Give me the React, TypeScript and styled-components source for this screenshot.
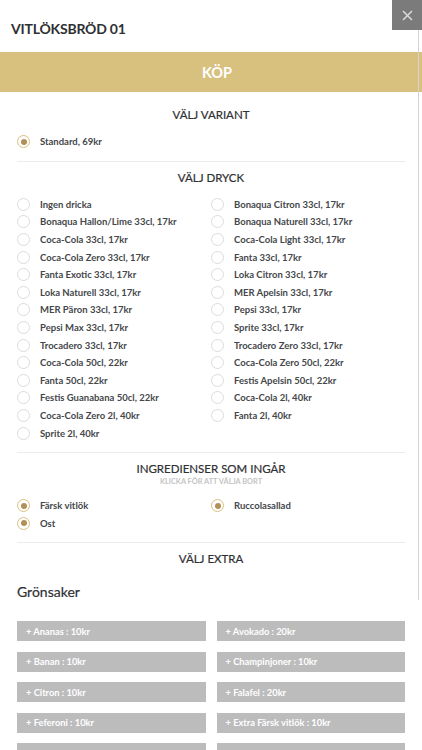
import React from 'react';
import styled, { createGlobalStyle } from 'styled-components';

const GlobalStyle = createGlobalStyle`
  html, body {
    margin: 0;
    padding: 0;
    background: #fff;
  }
  body {
    font-family: Lato, "Open Sans", "Liberation Sans", sans-serif;
    color: #333;
    -webkit-font-smoothing: antialiased;
  }
`;

const Modal = styled.div`
  position: relative;
  width: 422px;
  height: 750px;
  overflow: hidden;
  background: #fff;
`;

const Header = styled.div`
  height: 52px;
  display: flex;
  align-items: center;
  padding: 4px 11px 0;
  box-sizing: border-box;
`;

const Title = styled.h1`
  margin: 0;
  font-size: 14px;
  font-weight: 700;
  color: #2f3033;
  letter-spacing: -0.2px;
`;

const CloseButton = styled.button`
  position: absolute;
  top: 0;
  right: 0;
  width: 30px;
  height: 30px;
  border: 0;
  padding: 0;
  background: #7b7b7b;
  color: #d8d8d8;
  display: flex;
  align-items: center;
  justify-content: center;
`;

const ScrollTrack = styled.div`
  position: absolute;
  top: 30px;
  right: 3px;
  width: 1px;
  height: 570px;
  background: #d4d4d4;
`;

const BuyBar = styled.div`
  height: 40px;
  padding-left: 12px;
  background: #d8c07f;
  color: #fff;
  font-size: 14.5px;
  font-weight: 700;
  display: flex;
  align-items: center;
  justify-content: center;
`;

const Content = styled.div`
  padding: 0 17px;
`;

const Section = styled.section<{ $top?: number; $last?: boolean }>`
  padding: ${(p) => p.$top ?? 8}px 0 ${(p) => (p.$last ? 0 : 10)}px;
  border-bottom: ${(p) => (p.$last ? 'none' : '1px solid #ececec')};
`;

const SectionTitle = styled.h2`
  margin: 0;
  text-align: center;
  font-size: 11.5px;
  line-height: 16px;
  font-weight: 400;
  color: #2f3033;
  -webkit-text-stroke: 0.2px #2f3033;
`;

const SectionHint = styled.div`
  margin-top: 1px;
  text-align: center;
  font-size: 7.4px;
  line-height: 8px;
  font-weight: 700;
  color: #c4c4c4;
`;

const OptionGrid = styled.div<{ $gap?: number }>`
  display: grid;
  grid-template-columns: 194px 194px;
  margin-top: ${(p) => p.$gap ?? 10}px;
`;

const Option = styled.label`
  display: flex;
  align-items: center;
  height: 17.6px;
  gap: 10px;
  font-size: 9.5px;
  font-weight: 700;
  color: #45474b;
  white-space: nowrap;
`;

const Radio = styled.span<{ $checked?: boolean }>`
  width: 13px;
  height: 13px;
  box-sizing: border-box;
  border-radius: 50%;
  border: 1px solid ${(p) => (p.$checked ? '#d8c07f' : '#dcdcdc')};
  display: flex;
  align-items: center;
  justify-content: center;
  flex-shrink: 0;

  &::after {
    content: '';
    width: 6px;
    height: 6px;
    border-radius: 50%;
    background: #b38f58;
    display: ${(p) => (p.$checked ? 'block' : 'none')};
  }
`;

const GroupTitle = styled.h3`
  margin: 15px 0 0;
  font-size: 14px;
  line-height: 20px;
  font-weight: 400;
  color: #2f3033;
  -webkit-text-stroke: 0.2px #2f3033;
`;

const ExtraGrid = styled.div`
  display: grid;
  grid-template-columns: 1fr 1fr;
  column-gap: 11px;
  row-gap: 10.5px;
  margin-top: 19px;
`;

const ExtraButton = styled.button`
  height: 20px;
  border: 0;
  padding: 0 0 0 9px;
  background: #bcbcbd;
  color: #fff;
  font-family: inherit;
  font-size: 9.3px;
  font-weight: 700;
  text-align: left;
`;

const drinks = [
  'Ingen dricka',
  'Bonaqua Citron 33cl, 17kr',
  'Bonaqua Hallon/Lime 33cl, 17kr',
  'Bonaqua Naturell 33cl, 17kr',
  'Coca-Cola 33cl, 17kr',
  'Coca-Cola Light 33cl, 17kr',
  'Coca-Cola Zero 33cl, 17kr',
  'Fanta 33cl, 17kr',
  'Fanta Exotic 33cl, 17kr',
  'Loka Citron 33cl, 17kr',
  'Loka Naturell 33cl, 17kr',
  'MER Apelsin 33cl, 17kr',
  'MER Päron 33cl, 17kr',
  'Pepsi 33cl, 17kr',
  'Pepsi Max 33cl, 17kr',
  'Sprite 33cl, 17kr',
  'Trocadero 33cl, 17kr',
  'Trocadero Zero 33cl, 17kr',
  'Coca-Cola 50cl, 22kr',
  'Coca-Cola Zero 50cl, 22kr',
  'Fanta 50cl, 22kr',
  'Festis Apelsin 50cl, 22kr',
  'Festis Guanabana 50cl, 22kr',
  'Coca-Cola 2l, 40kr',
  'Coca-Cola Zero 2l, 40kr',
  'Fanta 2l, 40kr',
  'Sprite 2l, 40kr',
];

const ingredients = ['Färsk vitlök', 'Ruccolasallad', 'Ost'];

const extras = [
  '+ Ananas : 10kr',
  '+ Avokado : 20kr',
  '+ Banan : 10kr',
  '+ Champinjoner : 10kr',
  '+ Citron : 10kr',
  '+ Falafel : 20kr',
  '+ Feferoni : 10kr',
  '+ Extra Färsk vitlök : 10kr',
  '',
  '',
];

export default function App() {
  return (
    <>
      <GlobalStyle />
      <Modal>
        <Header>
          <Title>VITLÖKSBRÖD 01</Title>
        </Header>
        <CloseButton aria-label="Stäng">
          <svg width="11" height="11" viewBox="0 0 11 11">
            <path d="M1 1L10 10M10 1L1 10" stroke="currentColor" strokeWidth="1.6" />
          </svg>
        </CloseButton>
        <ScrollTrack />
        <BuyBar>KÖP</BuyBar>
        <Content>
          <Section $top={15}>
            <SectionTitle>VÄLJ VARIANT</SectionTitle>
            <OptionGrid>
              <Option>
                <Radio $checked />
                Standard, 69kr
              </Option>
            </OptionGrid>
          </Section>

          <Section>
            <SectionTitle>VÄLJ DRYCK</SectionTitle>
            <OptionGrid>
              {drinks.map((d) => (
                <Option key={d}>
                  <Radio />
                  {d}
                </Option>
              ))}
            </OptionGrid>
          </Section>

          <Section>
            <SectionTitle>INGREDIENSER SOM INGÅR</SectionTitle>
            <SectionHint>KLICKA FÖR ATT VÄLJA BORT</SectionHint>
            <OptionGrid $gap={11}>
              {ingredients.map((i) => (
                <Option key={i}>
                  <Radio $checked />
                  {i}
                </Option>
              ))}
            </OptionGrid>
          </Section>

          <Section $last>
            <SectionTitle>VÄLJ EXTRA</SectionTitle>
            <GroupTitle>Grönsaker</GroupTitle>
            <ExtraGrid>
              {extras.map((e, i) => (
                <ExtraButton key={i}>{e}</ExtraButton>
              ))}
            </ExtraGrid>
          </Section>
        </Content>
      </Modal>
    </>
  );
}
